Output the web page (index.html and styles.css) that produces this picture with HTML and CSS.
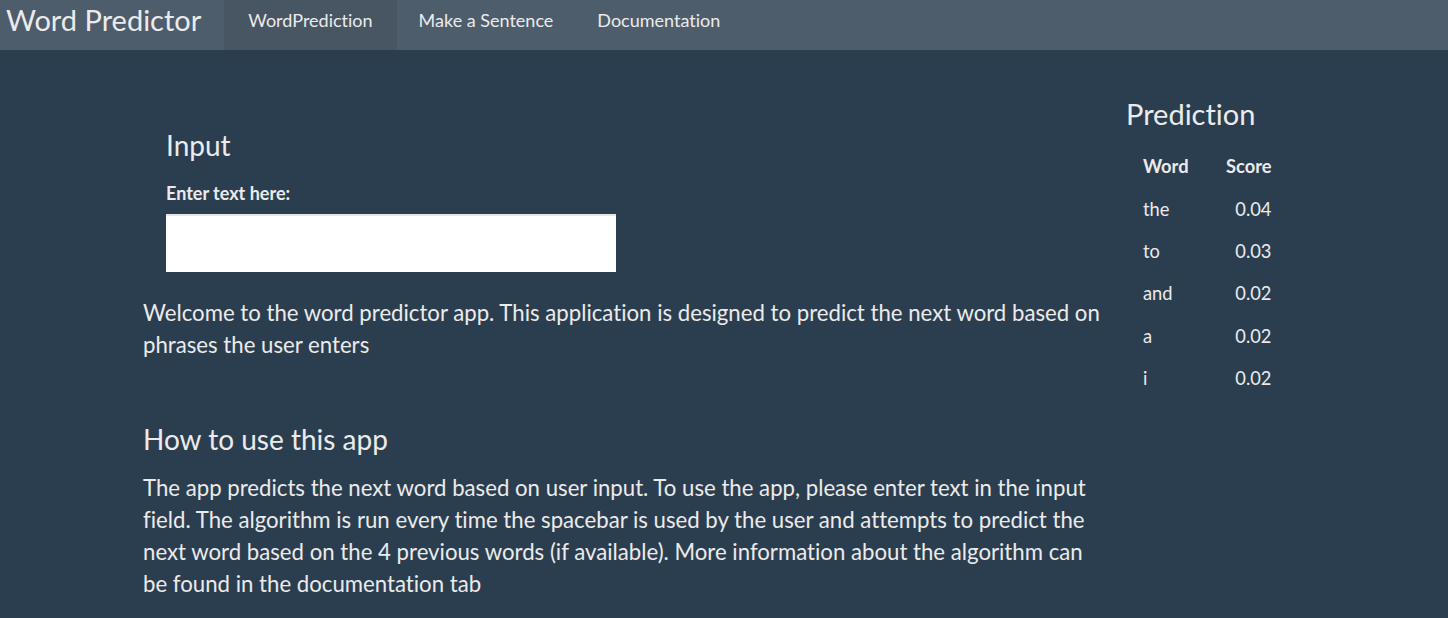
FILE: index.html
```html
<!DOCTYPE html>
<html>
<head>
<meta charset="utf-8">
<link rel="stylesheet" href="styles.css">
</head>
<body>
<nav class="navbar">
  <div class="brand">Word Predictor</div>
  <ul class="nav">
    <li class="nav-item active">WordPrediction</li>
    <li class="nav-item">Make a Sentence</li>
    <li class="nav-item">Documentation</li>
  </ul>
</nav>
<main class="layout">
  <section class="main-col">
    <div class="input-panel">
      <h3 class="h-input">Input</h3>
      <label class="label">Enter text here:</label>
      <div class="text-input"></div>
    </div>
    <p class="para para-intro">Welcome to the word predictor app. This application is designed to predict the next word based on phrases the user enters</p>
    <h3 class="h-section">How to use this app</h3>
    <p class="para para-howto">The app predicts the next word based on user input. To use the app, please enter text in the input field. The algorithm is run every time the spacebar is used by the user and attempts to predict the next word based on the 4 previous words (if available). More information about the algorithm can be found in the documentation tab</p>
  </section>
  <aside class="side-col">
    <h3 class="h-pred">Prediction</h3>
    <table class="pred-table">
      <thead><tr><th class="c-word">Word</th><th class="c-score">Score</th></tr></thead>
      <tbody>
        <tr><td class="c-word">the</td><td class="c-score">0.04</td></tr>
        <tr><td class="c-word">to</td><td class="c-score">0.03</td></tr>
        <tr><td class="c-word">and</td><td class="c-score">0.02</td></tr>
        <tr><td class="c-word">a</td><td class="c-score">0.02</td></tr>
        <tr><td class="c-word">i</td><td class="c-score">0.02</td></tr>
      </tbody>
    </table>
  </aside>
</main>
</body>
</html>
```

FILE: styles.css
```css
html, body {
  margin: 0;
  padding: 0;
}
body {
  background: #2b3e50;
  color: #ebebeb;
  font-family: Lato, "Open Sans", sans-serif;
  font-variant-ligatures: no-common-ligatures;
  height: 618px;
  overflow: hidden;
}
.navbar {
  display: flex;
  align-items: stretch;
  height: 50px;
  background: #4e5d6c;
}
.brand {
  font-size: 29px;
  line-height: 40px;
  padding: 0 23px 0 6px;
  color: #ebebeb;
}
.nav {
  display: flex;
  list-style: none;
  margin: 0;
  padding: 0;
}
.nav-item {
  font-size: 18px;
  line-height: 40px;
  padding: 0 22px 10px;
  color: #ebebeb;
}
.nav-item.active {
  background: #485563;
  padding: 0 24px 10px;
}
.layout {
  display: flex;
  padding-left: 143px;
}
.main-col {
  width: 962px;
  padding-top: 78px;
}
.input-panel {
  padding-left: 23px;
}
.h-input {
  font-size: 28px;
  font-weight: 400;
  margin: 0 0 20px;
  line-height: 34px;
}
.label {
  display: block;
  font-size: 18px;
  font-weight: 700;
  line-height: 22px;
  margin-bottom: 10px;
}
.text-input {
  width: 450px;
  height: 58px;
  background: #fff;
  border-top: 2px solid #e6e6e6;
  box-sizing: border-box;
}
.para {
  font-size: 22.2px;
  line-height: 31.7px;
  margin: 0;
}
.para-intro {
  margin-top: 25px;
}
.h-section {
  font-size: 28px;
  font-weight: 400;
  line-height: 34px;
  margin: 62px 0 0;
}
.para-howto {
  margin-top: 16px;
}
.side-col {
  padding-left: 21px;
  padding-top: 46px;
}
.h-pred {
  font-size: 29px;
  font-weight: 400;
  line-height: 36px;
  margin: 0 0 13px;
}
.pred-table {
  border-collapse: collapse;
  margin-left: 9px;
  font-size: 18.3px;
}
.pred-table th, .pred-table td {
  height: 42.4px;
  padding: 0 8px;
}
.pred-table th {
  font-weight: 700;
}
.c-word {
  text-align: left;
  width: 67px;
}
.c-score {
  text-align: right;
}
```
